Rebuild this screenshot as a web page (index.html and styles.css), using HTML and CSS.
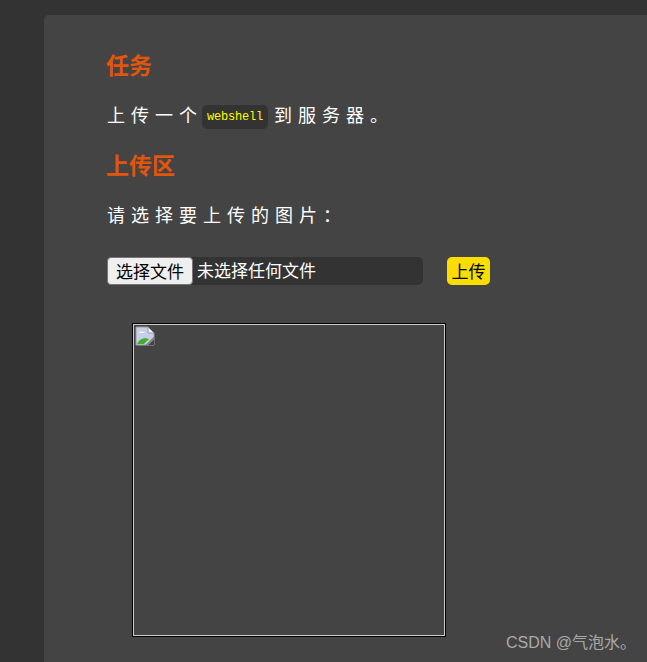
FILE: index.html
```html
<!DOCTYPE html>
<html>
<head>
    <meta charset="UTF-8">
    <title>上传区</title>
    <link rel="stylesheet" href="styles.css">
</head>
<body>
    <div class="card">
        <h2>任务</h2>
        <p>上传一个<code>webshell</code>到服务器。</p>
        <h2>上传区</h2>
        <p>请选择要上传的图片：</p>

        <form class="upload-form">
            <div class="file-field">
                <button type="button" class="file-btn">选择文件</button>
                <span class="file-name">未选择任何文件</span>
            </div>
            <button type="button" class="submit-btn">上传</button>
        </form>

        <div class="preview">
            <svg class="broken-img" width="20" height="20" viewBox="0 0 20 20">
                <path d="M1 1h12l6 6v12H1z" fill="#c6cfe8" stroke="#9a9a9a"/>
                <path d="M13 1v6h6z" fill="#f4f4f4" stroke="#9a9a9a"/>
                <path d="M4 7c1-2 5-2 6 0z" fill="#fff"/>
                <path d="M2 18c2-5 8-7 12-5l-5 5z" fill="#43b02a"/>
                <path d="M19 11l-8 8h8z" fill="#444"/>
                <path d="M19 12l-7 7" stroke="#8a8a8a" stroke-width="2"/>
            </svg>
        </div>
    </div>
    <div class="watermark">CSDN @气泡水。</div>
</body>
</html>
```

FILE: styles.css
```css
html, body {
    height: 100%;
}
body {
    margin: 0;
    padding: 15px 0 0 44px;
    box-sizing: border-box;
    overflow: hidden;
    background: #333;
    color: #fff;
    font-family: "Liberation Sans", "Noto Sans CJK SC", sans-serif;
}
.card {
    height: 100%;
    box-sizing: border-box;
    padding: 36px 0 0 63px;
    background: #444;
    border-radius: 5px 0 0 0;
}
h2 {
    margin: 0 0 0 -1px;
    height: 30px;
    font-size: 23px;
    line-height: 30px;
    color: #e2560c;
}
p {
    margin: 21px 0;
    height: 28px;
    font-size: 18px;
    line-height: 28px;
    letter-spacing: 6px;
}
code {
    display: inline-block;
    margin: 0 6px 0 -1px;
    padding: 0 5px;
    width: 56px;
    height: 24px;
    vertical-align: middle;
    background: #333;
    border-radius: 5px;
    color: #ff0;
    font-family: "Liberation Mono", monospace;
    font-size: 12px;
    line-height: 24px;
    letter-spacing: -0.2px;
}
.upload-form {
    display: flex;
    align-items: center;
    gap: 24px;
    margin-top: 27px;
}
.file-field {
    display: flex;
    width: 316px;
    height: 28px;
    background: #333;
    border-radius: 5px;
}
.file-btn {
    width: 86px;
    height: 28px;
    padding: 0 0 2px;
    background: #efefef;
    border: 1px solid #767676;
    border-radius: 4px;
    color: #000;
    font: inherit;
    font-size: 17px;
}
.file-name {
    margin-left: 4px;
    font-size: 17px;
    line-height: 30px;
}
.submit-btn {
    width: 43px;
    height: 28px;
    padding: 0 0 2px;
    background: #f9dc00;
    border: 0;
    border-radius: 5px;
    color: #000;
    font: inherit;
    font-size: 17px;
}
.preview {
    width: 310px;
    height: 310px;
    margin: 39px 0 0 26px;
    background: #444;
    border: 1px solid #ccc;
    outline: 1px solid #000;
}
.broken-img {
    display: block;
    margin: 1px 0 0 1px;
}
.watermark {
    position: absolute;
    right: 11px;
    bottom: 8px;
    color: rgba(255, 255, 255, 0.55);
    font-size: 16px;
    line-height: 22px;
}
```
